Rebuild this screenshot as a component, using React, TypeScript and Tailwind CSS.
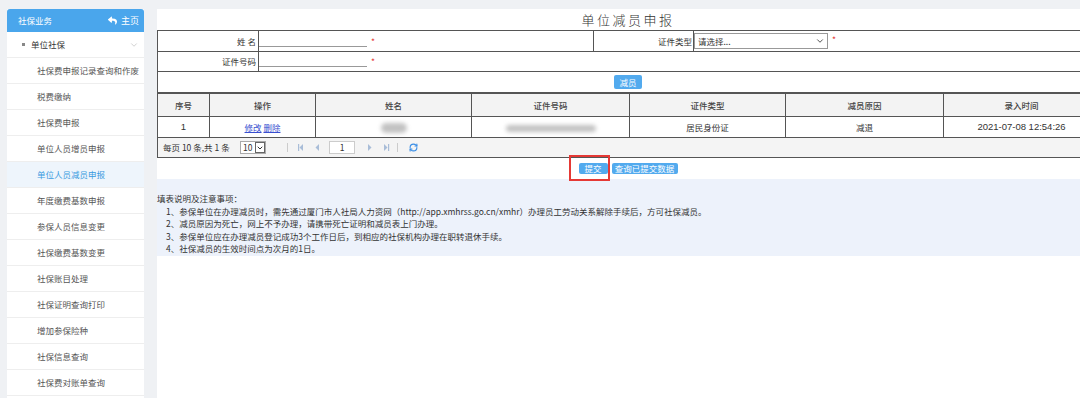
import { ChevronDown, RefreshCw } from 'lucide-react'
import { FaReply } from 'react-icons/fa'

const menu = [
  '社保费申报记录查询和作废',
  '税费缴纳',
  '社保费申报',
  '单位人员增员申报',
  '单位人员减员申报',
  '年度缴费基数申报',
  '参保人员信息变更',
  '社保缴费基数变更',
  '社保账目处理',
  '社保证明查询打印',
  '增加参保险种',
  '社保信息查询',
  '社保费对账单查询',
]

const cols = [52, 106, 156, 158, 156, 158, 156]
const heads = ['序号', '操作', '姓名', '证件号码', '证件类型', '减员原因', '录入时间']

function Sidebar() {
  return (
    <aside className="ml-[7px] flex w-[137px] shrink-0 flex-col bg-white">
      <div className="flex h-[23px] items-center justify-between rounded-t-[3px] bg-[#4aa6ec] pl-[11px] pr-[5px] text-white">
        <span>社保业务</span>
        <span className="flex items-center gap-[4px] text-[9px]">
          <FaReply className="h-[9px] w-[9px]" />
          主页
        </span>
      </div>
      <div className="flex h-[26px] items-center border-b border-[#eeeeee] pl-[15px] pr-[5px] text-[#333]">
        <span className="mr-[6px] h-[3px] w-[3px] bg-[#888]" />
        <span className="flex-1">单位社保</span>
        <ChevronDown className="h-[10px] w-[10px] text-[#b5b5b5]" strokeWidth={1.5} />
      </div>
      {menu.map((m) => {
        const active = m === '单位人员减员申报'
        return (
          <div
            key={m}
            className={
              active
                ? 'flex h-[26px] shrink-0 items-center border-b border-[#eeeeee] bg-[#eef5fc] pl-[30px] text-[#3a9be0]'
                : 'flex h-[26px] shrink-0 items-center border-b border-[#eeeeee] pl-[30px] text-[#555]'
            }
          >
            {m}
          </div>
        )
      })}
    </aside>
  )
}

function Blur({ w, h }: { w: number; h: number }) {
  return <span className="inline-block rounded-full bg-[#c2c2c2] align-middle blur-[2px]" style={{ width: w, height: h }} />
}

function PagerIcon({ kind }: { kind: 'first' | 'prev' | 'next' | 'last' }) {
  const tri = kind === 'first' || kind === 'prev' ? 'M6 1 L2.5 4.5 L6 8 Z' : 'M3 1 L6.5 4.5 L3 8 Z'
  return (
    <svg width="9" height="9" viewBox="0 0 9 9" className="text-[#a9bdd8]">
      <path d={tri} fill="currentColor" />
      {kind === 'first' && <rect x="1" y="1" width="1.2" height="7" fill="currentColor" />}
      {kind === 'last' && <rect x="7" y="1" width="1.2" height="7" fill="currentColor" />}
    </svg>
  )
}

function MainPanel() {
  return (
    <main className="ml-[13px] flex w-[942px] shrink-0 flex-col bg-white">
      <div className="flex h-[21px] items-center justify-center text-[13px] font-light tracking-[2.5px] text-[#333]">
        单位减员申报
      </div>

      {/* form */}
      <table className="w-full table-fixed border-collapse">
        <colgroup>
          <col className="w-[101px]" />
          <col className="w-[335px]" />
          <col className="w-[100px]" />
          <col />
        </colgroup>
        <tbody>
          <tr className="h-[21px]">
            <td className="border border-[#555] pr-[2px] text-right text-[#333]">姓 名</td>
            <td className="border border-[#555]">
              <span className="inline-block h-[9px] w-[108px] border-b border-[#999] align-middle" />
              <span className="ml-[4px] text-[#e53935]">*</span>
            </td>
            <td className="border border-[#555] pr-[1px] text-right text-[#333]">证件类型</td>
            <td className="border border-[#555]">
              <span className="inline-flex h-[16px] w-[134px] items-center justify-between border border-[#999] pl-[3px] pr-[2px] align-middle text-[#333]">
                请选择...
                <ChevronDown className="h-[10px] w-[10px] text-[#333]" strokeWidth={2} />
              </span>
              <span className="ml-[4px] text-[#e53935]">*</span>
            </td>
          </tr>
          <tr className="h-[20px]">
            <td className="border border-[#555] pr-[2px] text-right text-[#333]">证件号码</td>
            <td colSpan={3} className="border border-[#555]">
              <span className="inline-block h-[9px] w-[108px] border-b border-[#999] align-middle" />
              <span className="ml-[4px] text-[#e53935]">*</span>
            </td>
          </tr>
          <tr className="h-[21px]">
            <td colSpan={4} className="border border-[#555] text-center">
              <span className="inline-flex h-[14px] w-[28px] items-center justify-center rounded-[2px] bg-[#52aaee] text-white">减员</span>
            </td>
          </tr>
        </tbody>
      </table>

      {/* list */}
      <table className="w-full table-fixed border-collapse">
        <colgroup>
          {cols.map((w, i) => (
            <col key={i} style={{ width: w }} />
          ))}
        </colgroup>
        <thead>
          <tr className="h-[23px] bg-[#f3f3f3]">
            {heads.map((h) => (
              <th key={h} className="border border-[#555] font-medium text-[#444]">
                {h}
              </th>
            ))}
          </tr>
        </thead>
        <tbody>
          <tr className="h-[21px] text-center text-[#333]">
            <td className="border border-[#555] font-['Liberation_Sans',sans-serif] text-[9.5px]">1</td>
            <td className="border border-[#555] text-[#3a4fd0]">
              <span className="underline">修改</span> <span className="underline">删除</span>
            </td>
            <td className="border border-[#555]">
              <Blur w={26} h={10} />
            </td>
            <td className="border border-[#555]">
              <Blur w={90} h={7} />
            </td>
            <td className="border border-[#555]">居民身份证</td>
            <td className="border border-[#555]">减退</td>
            <td className="border border-[#555] font-['Liberation_Sans',sans-serif] text-[9.5px]">2021-07-08 12:54:26</td>
          </tr>
          <tr className="h-[20px] bg-[#f4f4f4]">
            <td colSpan={7} className="border border-[#555] pl-[5px] text-[#333]">
              <div className="flex items-center">
                <span className="w-[77px]">每页 10 条,共 1 条</span>
                <span className="flex h-[13px] w-[26px] items-center justify-between border border-[#aaa] bg-white pl-[2px]">
                  10
                  <span className="flex h-[11px] w-[10px] items-center justify-center border border-[#666]">
                    <ChevronDown className="h-[8px] w-[8px]" strokeWidth={3} />
                  </span>
                </span>
                <span className="ml-[21px] h-[9px] border-l border-[#ccc]" />
                <span className="ml-[9px]"><PagerIcon kind="first" /></span>
                <span className="ml-[7px]"><PagerIcon kind="prev" /></span>
                <span className="ml-[7px] flex h-[13px] w-[26px] items-center justify-center border border-[#ccc] bg-white">1</span>
                <span className="ml-[10px]"><PagerIcon kind="next" /></span>
                <span className="ml-[7px]"><PagerIcon kind="last" /></span>
                <span className="ml-[7px] h-[9px] border-l border-[#ccc]" />
                <RefreshCw className="ml-[11px] h-[9px] w-[9px] text-[#3a8ee6]" strokeWidth={3} />
              </div>
            </td>
          </tr>
        </tbody>
      </table>

      {/* actions */}
      <div className="flex h-[21px] items-center justify-center gap-[4px]">
        <span className="relative inline-flex h-[11px] w-[29px] items-center justify-center rounded-[2px] bg-[#52aaee] text-white">
          提交
          <span className="absolute -left-[10px] -top-[8px] h-[26px] w-[41px] border-2 border-[#e53935]" />
        </span>
        <span className="inline-flex h-[11px] w-[66px] items-center justify-center rounded-[2px] bg-[#52aaee] text-white">
          查询已提交数据
        </span>
      </div>

      {/* notes */}
      <div className="w-[923px] bg-[#edf2fb] pb-[1px] pt-[13px] leading-[12.5px] text-[#333]">
        <p>填表说明及注意事项：</p>
        <ol className="pl-[9px]">
          <li>1、参保单位在办理减员时，需先通过厦门市人社局人力资网（http://app.xmhrss.go.cn/xmhr）办理员工劳动关系解除手续后，方可社保减员。</li>
          <li>2、减员原因为死亡，网上不予办理，请携带死亡证明和减员表上门办理。</li>
          <li>3、参保单位应在办理减员登记成功3个工作日后，到相应的社保机构办理在职转退休手续。</li>
          <li>4、社保减员的生效时间点为次月的1日。</li>
        </ol>
      </div>
    </main>
  )
}

export default function App() {
  return (
    <div className="flex h-[398px] w-[1080px] overflow-hidden bg-[#eff1f4] pt-[9px] font-['Noto_Sans_CJK_SC',sans-serif] text-[8.5px]">
      <Sidebar />
      <MainPanel />
    </div>
  )
}
